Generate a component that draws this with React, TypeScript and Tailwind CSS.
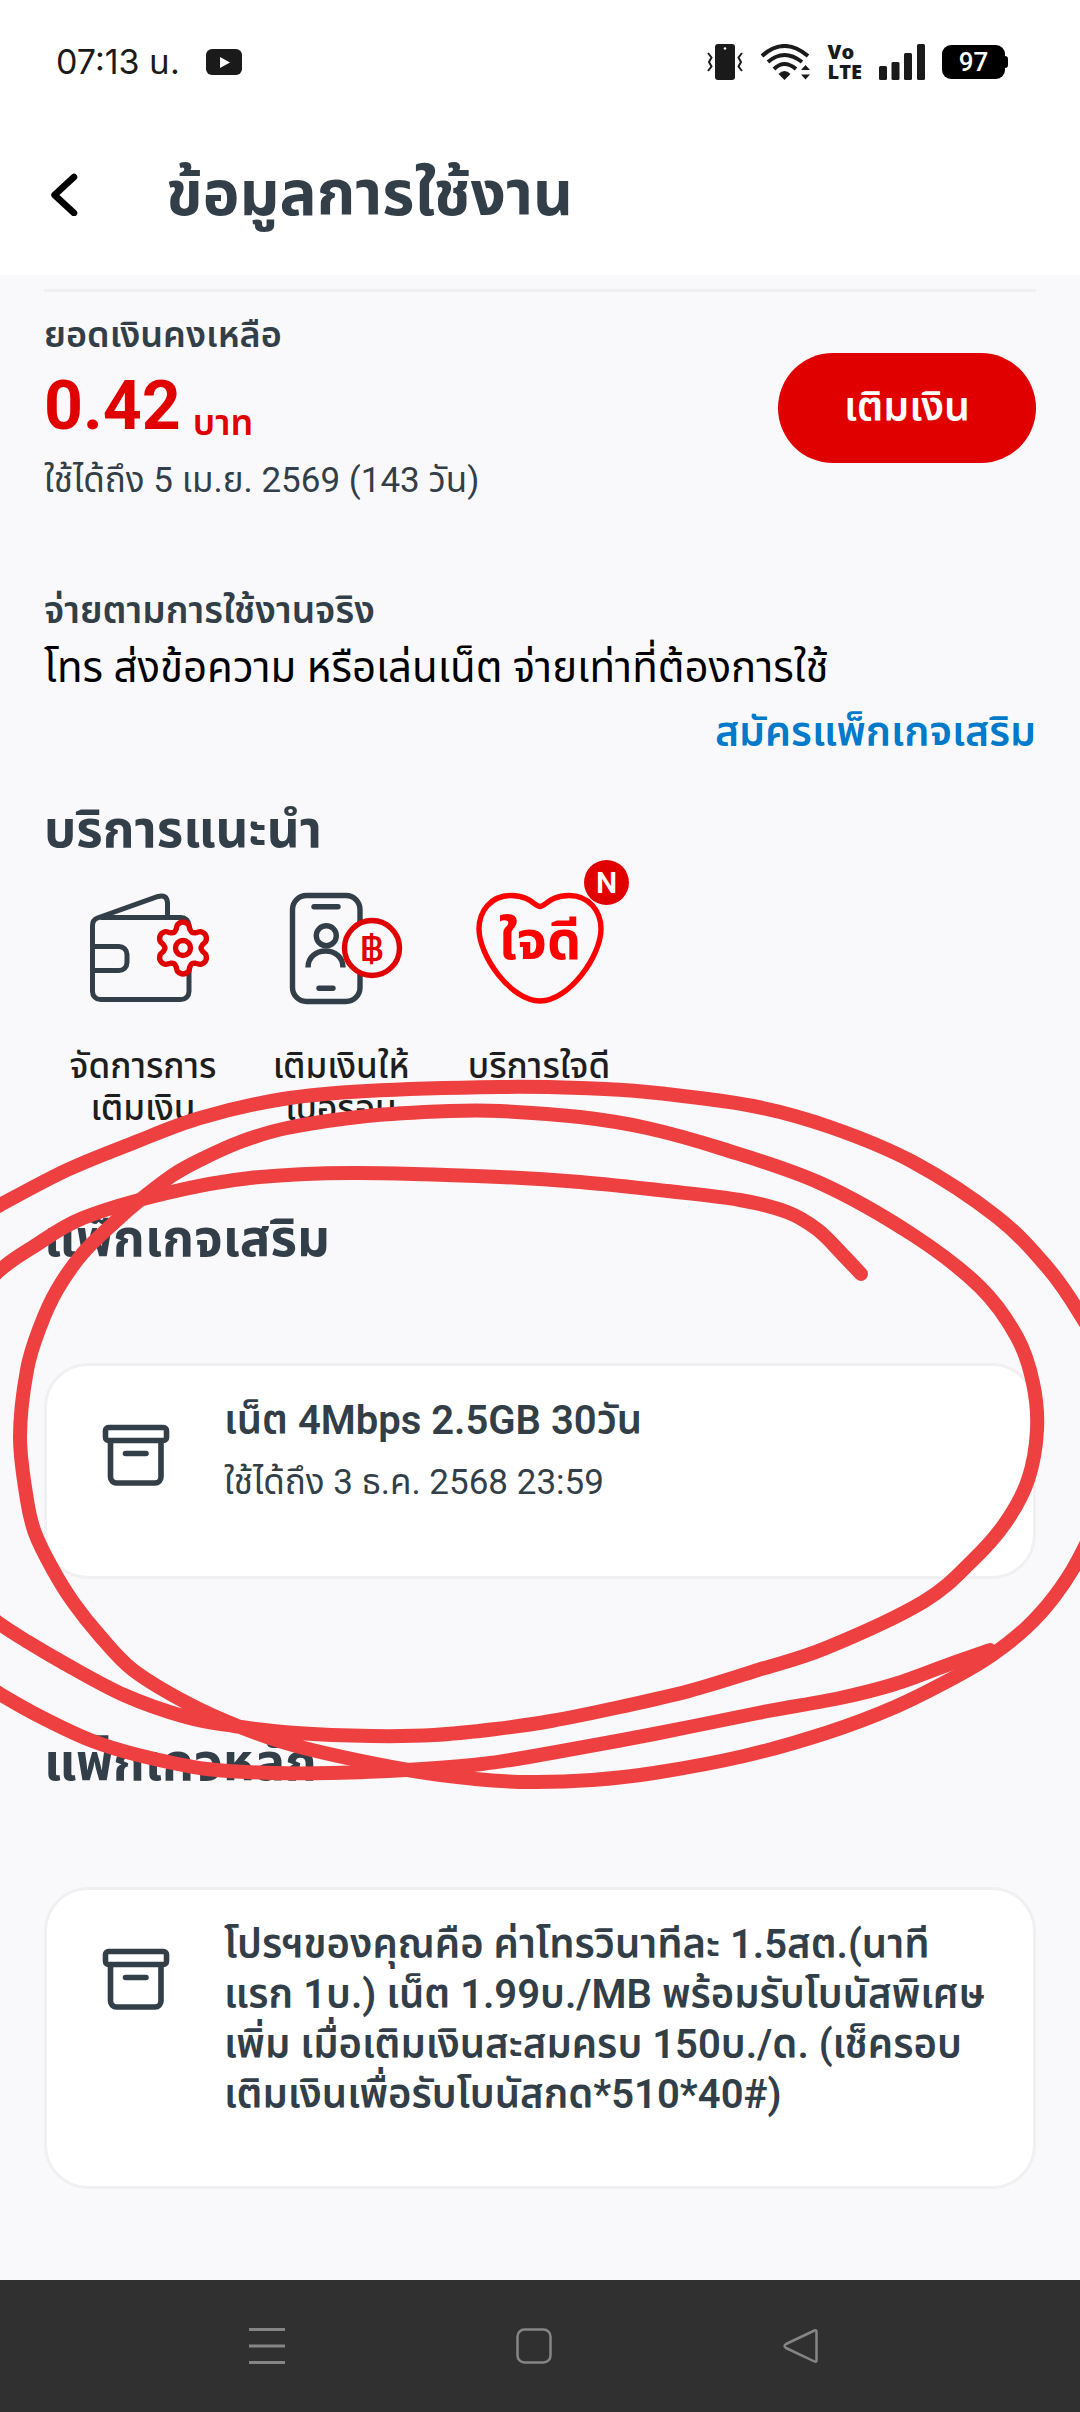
type Point = [number, number];

// Catmull-Rom through the points, written as cubic beziers
function smoothPath(points: Point[], closed = false) {
  const n = points.length;
  const at = (i: number) =>
    closed ? points[(i + n) % n] : points[Math.max(0, Math.min(n - 1, i))];
  let d = `M${points[0][0]} ${points[0][1]}`;
  for (let i = 0; i < (closed ? n : n - 1); i++) {
    const [p0, p1, p2, p3] = [at(i - 1), at(i), at(i + 1), at(i + 2)];
    d += `C${p1[0] + (p2[0] - p0[0]) / 6} ${p1[1] + (p2[1] - p0[1]) / 6} ${
      p2[0] - (p3[0] - p1[0]) / 6
    } ${p2[1] - (p3[1] - p1[1]) / 6} ${p2[0]} ${p2[1]}`;
  }
  return closed ? d + "Z" : d;
}

const scribble: Point[][] = [
  [
    [861, 1274], [843, 1255], [818, 1230], [787, 1212], [740, 1200], [667, 1191],
    [580, 1182], [500, 1177], [353, 1173], [250, 1178], [167, 1193], [83, 1218],
    [33, 1247], [0, 1270], [-40, 1310],
  ],
  [
    [-30, 1222], [0, 1205], [67, 1170], [133, 1143], [200, 1118], [283, 1099],
    [367, 1091], [500, 1087], [580, 1088], [647, 1092], [753, 1106], [830, 1127],
    [913, 1162], [997, 1217], [1047, 1267], [1080, 1314], [1110, 1370],
    [1118, 1440], [1105, 1500], [1078, 1560], [1054, 1597], [1026, 1628],
    [992, 1655], [957, 1676], [895, 1707], [826, 1733], [744, 1756], [654, 1773],
    [592, 1780], [530, 1782], [475, 1779], [408, 1770], [300, 1747], [240, 1727],
    [187, 1703], [133, 1670], [100, 1636], [73, 1602], [52, 1568], [35, 1533],
    [27, 1500], [20, 1437], [27, 1370], [40, 1327], [57, 1290], [83, 1253],
    [117, 1220], [140, 1200], [173, 1175], [200, 1160], [240, 1142], [287, 1128],
    [367, 1116], [450, 1111], [500, 1111], [580, 1117], [647, 1128], [723, 1149],
    [820, 1183], [913, 1235], [980, 1287], [1017, 1337], [1033, 1383],
    [1037, 1430], [1028, 1480], [1006, 1522], [973, 1560], [923, 1602],
    [826, 1648], [758, 1670], [689, 1691], [620, 1707], [551, 1721], [496, 1729],
    [434, 1735], [372, 1736], [296, 1733], [234, 1726], [186, 1717], [124, 1695],
    [62, 1662], [28, 1642], [0, 1624], [-30, 1600],
  ],
  [
    [-30, 1675], [0, 1694], [41, 1717], [90, 1740], [138, 1755], [207, 1769],
    [275, 1773], [331, 1773], [406, 1770], [482, 1764], [551, 1753], [654, 1734],
    [758, 1713], [840, 1698], [895, 1684], [950, 1664], [990, 1650],
  ],
];

function Scribble() {
  return (
    <svg
      className="pointer-events-none absolute left-0 top-0 w-full"
      viewBox="0 0 1080 2412"
      fill="none"
      stroke="#ee4040"
      strokeWidth="14"
      strokeLinecap="round"
      aria-hidden="true"
    >
      {scribble.map((points, i) => (
        <path key={i} d={smoothPath(points)} />
      ))}
    </svg>
  );
}

const gear: Point[] = Array.from({ length: 6 }).flatMap((_, i) =>
  [
    [-30, 18], [-20, 20], [-13, 24], [0, 26], [13, 24], [20, 20],
  ].map(([angle, r]): Point => {
    const a = ((30 + i * 60 + angle) * Math.PI) / 180;
    return [112 + r * Math.cos(a), 60 + r * Math.sin(a)];
  })
);

function WalletIcon() {
  return (
    <svg className="h-30 w-36" viewBox="0 0 144 120" fill="none" stroke="#333f48" strokeWidth="5">
      <path d="M29.500 29.500H110a8 8 0 0 1 8 8V103.500a8 8 0 0 1-8 8H29.500a8 8 0 0 1-8-8V37.500a8 8 0 0 1 5-7.500L87 8.500q9-2.500 9.500 6.500V29" />
      <path d="M21.500 58.500H48a8 8 0 0 1 8 8V74.500a8 8 0 0 1-8 8H21.500" />
      <path d={smoothPath(gear, true)} fill="#f9f9fb" stroke="#e10000" strokeWidth="5.4" />
      <circle cx="112" cy="60" r="7.500" stroke="#e10000" strokeWidth="5.4" />
    </svg>
  );
}

function PhoneIcon() {
  return (
    <svg className="h-30 w-36" viewBox="0 0 144 120" fill="none" stroke="#333f48" strokeWidth="5.4">
      <rect x="23.500" y="7.500" width="67.500" height="106" rx="14" />
      <path strokeLinecap="round" d="M45 18.700H69M50 100.300H64" />
      <circle cx="57.300" cy="47.700" r="10" />
      <path d="M39 79.500C39 57.500 74 57.500 74 79.500" />
      <circle cx="103" cy="60" r="27.500" fill="#f9f9fb" stroke="#e10000" />
      <text
        className="font-['Kanit','Noto_Sans_Thai',sans-serif] text-[38px]"
        x="103"
        y="73"
        textAnchor="middle"
        fill="#e10000"
        stroke="none"
      >
        ฿
      </text>
    </svg>
  );
}

function HeartIcon() {
  return (
    <svg className="h-30 w-36" viewBox="0 0 144 120" fill="none">
      <path
        d="M73 18.500C68 18.500 63 7.500 44 7.500C24 7.500 12 23 12 41C12 68 44 113 73 113C102 113 134 68 134 41C134 23 122 7.500 102 7.500C83 7.500 78 18.500 73 18.500Z"
        stroke="#ff0000"
        strokeWidth="5.4"
      />
      <text
        className="font-['Noto_Sans_Thai',sans-serif] text-[54px] font-bold"
        x="73"
        y="71"
        textAnchor="middle"
        fill="#ff0000"
      >
        ใจดี
      </text>
    </svg>
  );
}

function ArchiveIcon() {
  return (
    <svg
      className="h-[62px] w-[68px] shrink-0"
      viewBox="0 0 68 62"
      fill="none"
      stroke="#333f48"
      strokeWidth="5.6"
      strokeLinecap="round"
    >
      <rect x="3.500" y="3.500" width="61" height="13" rx="3" />
      <path d="M8.500 18V53a6 6 0 0 0 6 6H53a6 6 0 0 0 6-6V18M23.500 29.500H44" />
    </svg>
  );
}

function StatusBar() {
  return (
    <div className="flex h-[124px] items-center justify-between pl-14 pr-[72px] text-[#1a1a1a]">
      <div className="flex items-center gap-[26px]">
        <span className="font-['Inter','Noto_Sans_Thai',sans-serif] text-[34px] leading-10">07:13 น.</span>
        <svg className="h-[26px] w-9" viewBox="0 0 36 26">
          <rect width="36" height="26" rx="6" fill="#1a1a1a" />
          <path d="M14 8v11l10-5.500z" fill="#fff" />
        </svg>
      </div>
      <div className="flex items-center gap-[17px]">
        <svg className="h-9 w-9" viewBox="0 0 36 36" fill="none" stroke="#1a1a1a" strokeWidth="2">
          <rect x="8" width="20" height="36" rx="3" fill="#1a1a1a" stroke="none" />
          <circle cx="18" cy="4.500" r="1.300" fill="#fff" stroke="none" />
          <path d="M1 9l3.500 4.500L2 18l2.500 4.500L1 27M35 9l-3.500 4.500L34 18l-2.500 4.500L35 27" />
        </svg>
        <svg className="h-9 w-[51px]" viewBox="0 0 51 36" fill="none" stroke="#1a1a1a" strokeWidth="4">
          <path d="M2 12Q24-8 48 12M8 18Q24 4 42 18M14 25Q24 15 36 25" />
          <path d="M18.500 30q6-6 12 0l-6 6zM41 26l4.500-5 4.500 5zM41 30.500l4.500 5 4.500-5z" fill="#1a1a1a" stroke="none" />
        </svg>
        <span className="flex flex-col font-['Open_Sans',sans-serif] text-[20px] font-extrabold leading-5">
          <span>Vo</span>
          <span>LTE</span>
        </span>
        <svg className="h-9 w-[46px]" viewBox="0 0 46 36" fill="#1a1a1a">
          <rect y="22" width="8" height="14" rx="1.500" />
          <rect x="12.500" y="18" width="8" height="18" rx="1.500" />
          <rect x="25" y="9" width="8" height="27" rx="1.500" />
          <rect x="38" width="8" height="36" rx="1.500" />
        </svg>
        <div className="flex items-center">
          <span className="flex h-[34px] w-[63px] items-center justify-center rounded-[9px] bg-black text-[26px] font-medium text-white">
            97
          </span>
          <span className="h-3 w-[3px] rounded-r bg-black" />
        </div>
      </div>
    </div>
  );
}

const services = [
  { name: "จัดการการ เติมเงิน", icon: <WalletIcon /> },
  { name: "เติมเงินให้ เบอร์อื่น", icon: <PhoneIcon /> },
  { name: "บริการใจดี", icon: <HeartIcon />, isNew: true },
];

interface PackageCardProps {
  title: string;
  expires?: string;
}

function PackageCard({ title, expires }: PackageCardProps) {
  return (
    <article className="mt-[88px] flex rounded-[44px] border-3 border-[#f0f0f2] bg-white pb-[66px] pl-[55px] pr-11 pt-[30px]">
      <div className="pt-7">
        <ArchiveIcon />
      </div>
      <div className="ml-[54px]">
        <h3 className="text-[40px] font-semibold leading-[50px]">{title}</h3>
        {expires && <p className="mt-[10px] text-[35px] leading-[54px]">{expires}</p>}
      </div>
    </article>
  );
}

export default function App() {
  return (
    <div className="relative flex min-h-screen flex-col overflow-hidden bg-[#f9f9fb] font-['Roboto','Noto_Sans_Thai',sans-serif] text-[#333f48]">
      <header className="bg-white">
        <StatusBar />
        <div className="flex h-[151px] items-center gap-[88px] pb-3 pl-[50px]">
          <button type="button" aria-label="ย้อนกลับ">
            <svg className="h-11 w-7" viewBox="0 0 28 44" fill="none" stroke="#000" strokeWidth="6.500" strokeLinecap="round" strokeLinejoin="round">
              <path d="M24 5L4.500 23L24 41" />
            </svg>
          </button>
          <h1 className="text-[62px] font-bold leading-[90px]">ข้อมูลการใช้งาน</h1>
        </div>
      </header>

      <main className="flex-1 px-11 pb-[88px] pt-[14px]">
        <section className="border-t-3 border-[#f0f0f2] pt-4">
          <div className="flex items-center justify-between">
            <div>
              <p className="text-[36px] font-semibold leading-[54px]">ยอดเงินคงเหลือ</p>
              <p className="mt-1 flex items-end gap-3 font-bold text-[#e10000]">
                <span className="text-[68px] leading-[80px]">0.42</span>
                <span className="text-[36px] font-semibold leading-[46px]">บาท</span>
              </p>
              <p className="mt-2 text-[35px] leading-[54px]">ใช้ได้ถึง 5 เม.ย. 2569 (143 วัน)</p>
            </div>
            <button
              type="button"
              className="h-[110px] w-[258px] rounded-full bg-[#e10000] text-[41px] font-semibold text-white"
            >
              เติมเงิน
            </button>
          </div>
        </section>

        <section className="mt-[76px] flex flex-col">
          <p className="text-[37px] font-semibold leading-[54px]">จ่ายตามการใช้งานจริง</p>
          <p className="text-[42px] leading-[60px] text-black">
            โทร ส่งข้อความ หรือเล่นเน็ต จ่ายเท่าที่ต้องการใช้
          </p>
          <a href="#packages" className="mt-1 self-end text-[41px] font-semibold leading-[60px] text-[#007ac9]">
            สมัครแพ็กเกจเสริม
          </a>
        </section>

        <section className="mt-8">
          <h2 className="text-[51px] font-bold leading-[72px]">บริการแนะนำ</h2>
          <div className="mt-[22px] flex">
            {services.map((service) => (
              <button
                key={service.name}
                type="button"
                className="relative flex w-[198px] flex-col items-center text-[#1e1e1e]"
              >
                {service.icon}
                <span className="mt-[38px] w-40 text-[35px] font-medium leading-[42px]">
                  {service.name}
                </span>
                {service.isNew && (
                  <span className="absolute -top-7 left-36 flex size-[45px] items-center justify-center rounded-full bg-[#e10000] text-[30px] font-semibold text-white">
                    N
                  </span>
                )}
              </button>
            ))}
          </div>
        </section>

        <section id="packages" className="mt-[73px]">
          <h2 className="text-[51px] font-bold leading-[72px]">แพ็กเกจเสริม</h2>
          <PackageCard title="เน็ต 4Mbps 2.5GB 30วัน" expires="ใช้ได้ถึง 3 ธ.ค. 2568 23:59" />
        </section>

        <section className="mt-[148px]">
          <h2 className="text-[51px] font-bold leading-[72px]">แพ็กเกจหลัก</h2>
          <PackageCard title="โปรฯของคุณคือ ค่าโทรวินาทีละ 1.5สต.(นาทีแรก 1บ.) เน็ต 1.99บ./MB พร้อมรับโบนัสพิเศษเพิ่ม เมื่อเติมเงินสะสมครบ 150บ./ด. (เช็ครอบเติมเงินเพื่อรับโบนัสกด*510*40#)" />
        </section>
      </main>

      <nav className="flex h-[132px] items-center justify-center gap-[231px] bg-[#303030] pr-3">
        <button type="button" aria-label="แอปล่าสุด">
          <svg className="size-9" viewBox="0 0 36 36" stroke="#858585" strokeWidth="3">
            <path d="M0 1.500H36M0 18H36M0 34.500H36" />
          </svg>
        </button>
        <button type="button" aria-label="หน้าแรก">
          <svg className="size-9" viewBox="0 0 36 36" fill="none" stroke="#858585" strokeWidth="2.500">
            <rect x="1.500" y="1.500" width="33" height="33" rx="7" />
          </svg>
        </button>
        <button type="button" aria-label="กลับ">
          <svg className="size-9" viewBox="0 0 36 36" fill="none" stroke="#858585" strokeWidth="2.500" strokeLinejoin="round">
            <path d="M33.500 3.500V32.500Q33.500 34.500 31.500 33.500L3 20Q0 18 3 16L31.500 2.500Q33.500 1.500 33.500 3.500Z" />
          </svg>
        </button>
      </nav>

      <Scribble />
    </div>
  );
}
